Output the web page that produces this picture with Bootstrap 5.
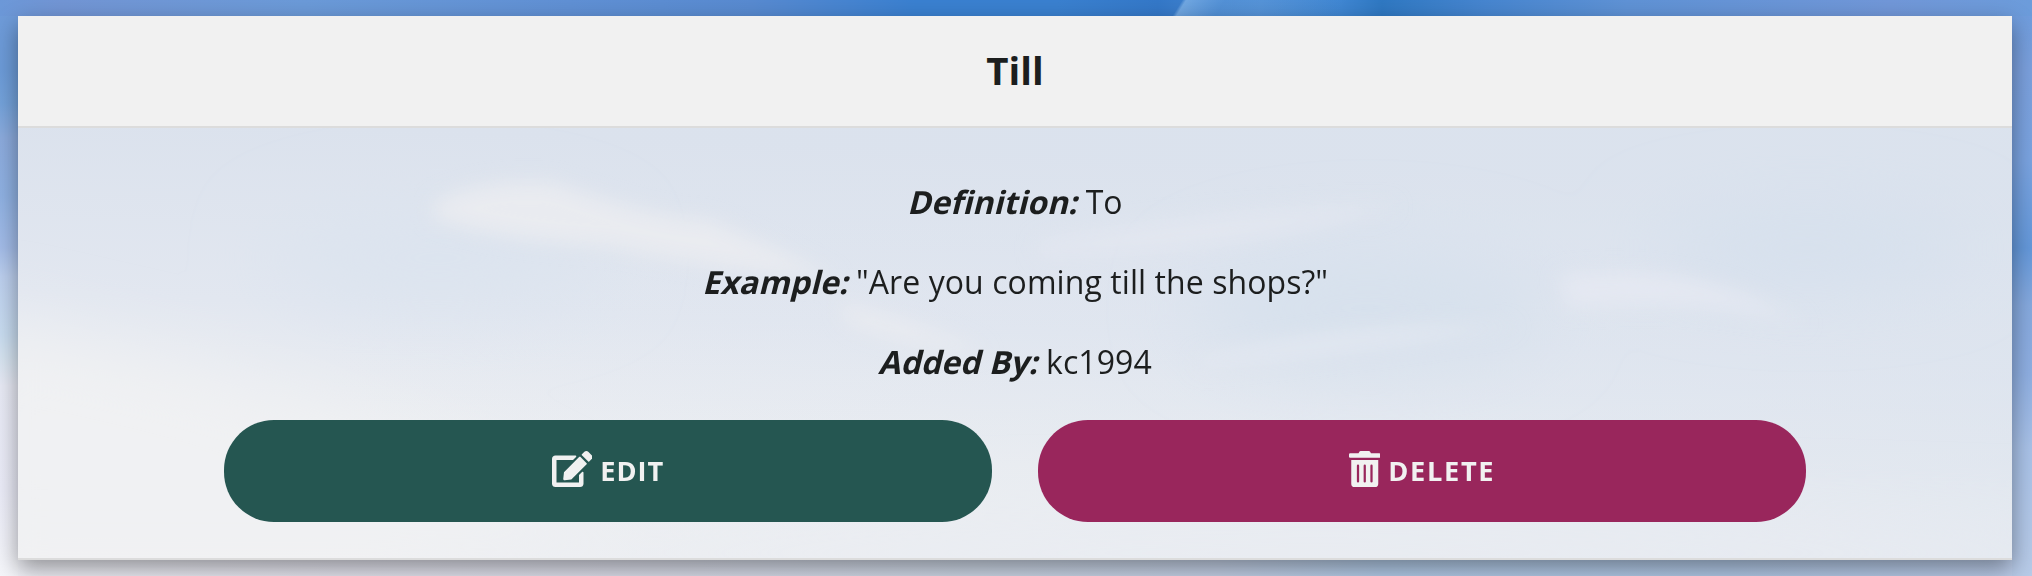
<!DOCTYPE html>
<html lang="en">
<head>
<meta charset="utf-8">
<meta name="viewport" content="width=device-width, initial-scale=1">
<title>Till</title>
<link href="https://cdn.jsdelivr.net/npm/bootstrap@5.3.0/dist/css/bootstrap.min.css" rel="stylesheet">
<style>
body{font-family:"Open Sans","Noto Sans",sans-serif;font-size:32px;line-height:48px;color:#1c1e1e;height:576px;overflow:hidden;padding:16px 20px 16px 18px;
background:
linear-gradient(122deg,transparent 57.9%,rgba(130,180,232,.75) 58.1%,rgba(110,165,225,.35) 60%,transparent 66%) top/100% 16px no-repeat,
linear-gradient(90deg,#6c98d8 0,#7295d4 3%,#6b9ad8 15%,#6090d4 28%,#588ad0 37%,#3a80d0 45%,#3a80cf 52%,#3478c8 57%,#4d8dd4 62%,#3f86d2 66%,#2f78c2 68%,#4685cf 73%,#5f92d5 80%,#7197d8 93%,#6c9cdb 100%) top/100% 16px no-repeat,
linear-gradient(180deg,#6f9bd9 0,#6c9bd8 12%,#74a2da 18%,#8cabdd 24%,#8fb1e2 34%,#a3bce8 43%,#bccfee 48%,#c8dcf0 58%,#d5e3f0 62%,#e8eaf5 67%,#ebecf8 85%,#f5f6fa 100%) left/18px 100% no-repeat,
linear-gradient(180deg,#6c9bdc 0,#7ba0dd 12%,#7aa3e0 28%,#6498da 43%,#86a9de 53%,#8fafe2 65%,#a9c2e8 78%,#b8cbe8 100%) right/20px 100% no-repeat,
linear-gradient(90deg,#f3f4fa 0,#e9e9f3 15%,#dfe1ed 30%,#cfd9e8 48%,#c6d3e9 60%,#b4cdea 68%,#b3cae8 85%,#bccdea 100%) #ccd}
.word-card{--bs-card-border-radius:0;--bs-card-inner-border-radius:0;--bs-card-border-width:0;height:544px;box-shadow:0 9px 22px rgba(0,0,0,.4);overflow:visible;color:inherit;background:none}
.word-card .card-header{height:112px;background:#f1f1f1;border-bottom:2px solid #dcdcdc;font-size:38.4px;font-weight:700;padding:0 0 3px}
.word-body{height:432px;padding:50px 206px 0;border-bottom:2px solid #dcdcdc;isolation:isolate}
.sky{left:0;top:0;width:100%;height:100%;z-index:-1}
.word-body p{margin:0 0 32px;letter-spacing:.07px}
.word-body p:last-of-type{margin-bottom:34px}
.term{display:inline-block;font-weight:700;transform:skewX(-14deg);transform-origin:50% 75%}
.act{height:102px;border-radius:50px;border:0;color:#f1f1f1!important;font-weight:700;font-size:27.2px;letter-spacing:1px}
.act svg{height:36px;fill:currentColor;margin-top:-4px}
.act-edit{background:#255651!important}.act-del{background:#99265c!important;letter-spacing:1.7px}
.act-row{column-gap:46px}
</style>
</head>
<body>
<article class="card word-card text-center">
<header class="card-header d-flex align-items-center justify-content-center">Till</header>
<div class="word-body position-relative">
<svg class="sky position-absolute" viewBox="0 0 1994 430" preserveAspectRatio="none" aria-hidden="true">
<defs>
<linearGradient id="g" x1="0" y1="1" x2=".18" y2="0"><stop offset="0" stop-color="#f2f2f3"/><stop offset=".3" stop-color="#edeff2"/><stop offset=".6" stop-color="#e2e7f0"/><stop offset="1" stop-color="#dbe2ed"/></linearGradient>
<linearGradient id="h"><stop offset=".15" stop-color="#dbe3ee" stop-opacity="0"/><stop offset="1" stop-color="#dbe3ee" stop-opacity=".6"/></linearGradient>
<filter id="b" x="-30%" y="-60%" width="160%" height="220%"><feGaussianBlur stdDeviation="10"/></filter>
<filter id="c" x="-40%" y="-80%" width="180%" height="260%"><feGaussianBlur stdDeviation="38"/></filter>
</defs>
<rect width="1994" height="430" fill="url(#g)"/><rect width="1994" height="430" fill="url(#h)"/>
<g filter="url(#c)"><ellipse cx="420" cy="130" rx="170" ry="50" fill="#dce4ef"/><ellipse cx="1350" cy="180" rx="180" ry="60" fill="#d7e1ed"/><ellipse cx="1790" cy="120" rx="160" ry="35" fill="#d5e0ed"/><path d="M-60 190L160 240L420 320L640 430H-60Z" fill="#f0f1f3"/><ellipse cx="1300" cy="425" rx="900" ry="30" fill="#e9ecf2"/></g>
<g filter="url(#b)" fill="#e9ebf0"><path d="M415 75Q460 50 535 55Q640 92 690 92Q760 120 820 153Q680 138 590 118Q480 112 415 90Z"/><path d="M820 175Q890 190 970 225Q890 220 830 195Z"/><path d="M1540 148Q1680 130 1790 198Q1690 168 1550 180Z" fill="#e6e9f2" opacity=".9"/><path d="M1020 112Q1240 75 1380 78Q1240 125 1020 130Z" fill="#e3e7f0" opacity=".8"/><path d="M1180 230Q1330 195 1500 198Q1330 225 1180 240Z" fill="#e3e8f1"/></g>
</svg>
<p><span class="term">Definition:</span> To</p>
<p><span class="term">Example:</span> "Are you coming till the shops?"</p>
<p><span class="term">Added By:</span> kc1994</p>
<div class="row g-0 act-row">
<div class="col"><a class="btn act act-edit w-100 d-flex align-items-center justify-content-center" href="#"><svg viewBox="0 0 576 512"><path d="M402.6 83.2l90.2 90.2c3.8 3.8 3.8 10 0 13.8L274.4 405.6l-92.8 10.3c-12.4 1.4-22.9-9.1-21.5-21.5l10.3-92.8L388.8 83.2c3.8-3.8 10-3.8 13.8 0zm162-22.9l-48.8-48.8c-15.2-15.2-39.9-15.2-55.2 0l-35.4 35.4c-3.8 3.8-3.8 10 0 13.8l90.2 90.2c3.8 3.8 10 3.8 13.8 0l35.4-35.4c15.2-15.3 15.2-40 0-55.2zM384 346.2V448H64V128h229.8c3.2 0 6.2-1.3 8.5-3.5l40-40c7.6-7.6 2.2-20.5-8.5-20.5H48C21.5 64 0 85.5 0 112v352c0 26.5 21.5 48 48 48h352c26.5 0 48-21.5 48-48V306.2c0-10.7-12.9-16-20.5-8.5l-40 40c-2.2 2.3-3.5 5.3-3.5 8.5z"/></svg><span class="ms-2">EDIT</span></a></div>
<div class="col"><a class="btn act act-del w-100 d-flex align-items-center justify-content-center" href="#"><svg viewBox="0 0 448 512"><path d="M32 464a48 48 0 0 0 48 48h288a48 48 0 0 0 48-48V128H32zm272-256a16 16 0 0 1 32 0v224a16 16 0 0 1-32 0zm-96 0a16 16 0 0 1 32 0v224a16 16 0 0 1-32 0zm-96 0a16 16 0 0 1 32 0v224a16 16 0 0 1-32 0zM432 32H312l-9.4-18.7A24 24 0 0 0 281.1 0H166.8a23.72 23.72 0 0 0-21.4 13.3L136 32H16A16 16 0 0 0 0 48v32a16 16 0 0 0 16 16h416a16 16 0 0 0 16-16V48a16 16 0 0 0-16-16z"/></svg><span class="ms-2">DELETE</span></a></div>
</div>
</div>
</article>
<script src="https://cdn.jsdelivr.net/npm/bootstrap@5.3.0/dist/js/bootstrap.bundle.min.js"></script>
</body>
</html>
